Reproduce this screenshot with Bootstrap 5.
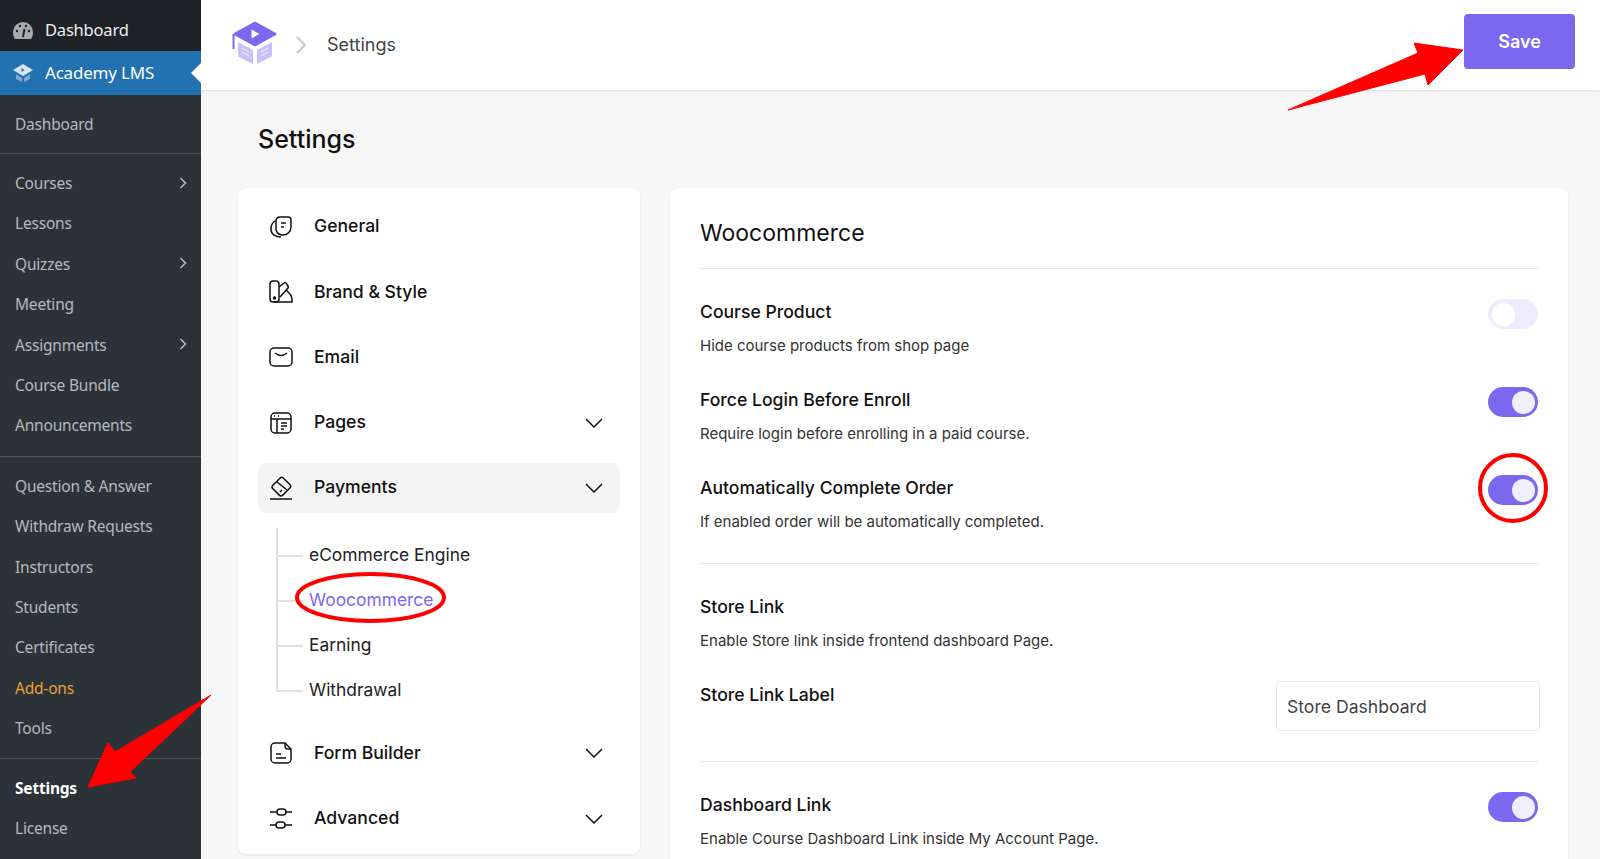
<!DOCTYPE html>
<html lang="en">
<head>
  <meta charset="UTF-8" />
  <title>Settings - Academy LMS</title>
  <link href="https://cdn.jsdelivr.net/npm/bootstrap@5.3.2/dist/css/bootstrap.min.css" rel="stylesheet"/>
  <style>
    html, body { height: 100%; overflow: hidden; }
    body { background: #f7f7f7; font-family: Inter, sans-serif; color: #111; }
    .wp-side { width: 201px; background: #2c3338; font-family: "Noto Sans", sans-serif; font-size: 15.5px; letter-spacing: -.2px; }
    .wp-top { height: 51px; background: #1d2327; color: #f0f0f1; padding-left: 12px; gap: 11px; font-size: 16.5px; padding-top: 10px; }
    .wp-cur { height: 44px; background: #2271b1; color: #fff; padding-left: 12px; gap: 11px; font-size: 17px; position: relative; }
    .wp-cur::after { content: ""; position: absolute; right: 0; top: 12px; border: 10px solid transparent; border-right-color: #fff; border-left: 0; }
    .wp-group { border-bottom: 1px solid #50565b; padding: 9.5px 15px; }
    .wp-first { height: 59px; padding-top: 1px; padding-bottom: 0; }
    .wp-last { padding: 9px 15px 0; }
    .wp-link { height: 40.4px; color: #b4b9be; position: relative; }
    .wp-link svg { position: absolute; right: -1px; top: 13px; }
    .wp-orange { color: #f0a030; }
    .wp-active { color: #fff; font-weight: 700; }
    .top-bar { height: 90px; background: #fff; box-shadow: 0 1px 3px rgba(0,0,0,.1); padding: 0 25px 0 31px; position: relative; }
    .top-logo { margin-bottom: 5px; }
    .crumb-sep { margin: 0 20px 0 17px; }
    .crumb-text { color: #444; font-size: 18px; margin-bottom: 2px; }
    .save-btn { width: 111px; height: 55px; margin-bottom: 7px; background: #7b68ee; border: 0; color: #fff; font-weight: 600; font-size: 18px; border-radius: 4px; }
    .page-title { font-size: 25px; font-weight: 500; margin: 34px 0 0 57px; height: 64px; line-height: 30px; }
    .panels { padding-left: 37px; gap: 30px; }
    .panel { background: #fff; border-radius: 8px; box-shadow: 0 1px 3px rgba(0,0,0,.08); }
    .menu-panel { width: 402px; height: 666px; padding: 6px 20px 0; }
    .menu-item { height: 65.3px; padding: 0 17px 0 11px; font-size: 17.6px; font-weight: 450; gap: 21px; }
    .menu-item svg.chev { margin-left: auto; }
    .menu-on { background: #f4f4f4; border-radius: 8px; height: 50px; margin: 7.5px 0; }
    .sub-list { margin: 15px 0 8px 18px; padding-top: 5px; font-size: 17.4px; position: relative; }
    .sub-list::before { content: ""; position: absolute; left: 0; top: 0; bottom: 21px; width: 2px; background: #ddd; }
    .sub-item { height: 45px; padding-left: 33px; position: relative; color: #222; }
    .sub-item::before { content: ""; position: absolute; left: 0; top: 22px; width: 27px; height: 2px; background: #e2e2e2; }
    .sub-on { color: #7b68ee; }
    .form-panel { width: 898px; height: 800px; padding: 22px 30px; }
    .form-title { font-size: 23px; font-weight: 400; height: 59px; border-bottom: 1px solid #e9e9e9; line-height: 46px; }
    .opt-name { font-size: 17.6px; font-weight: 450; line-height: 24px; }
    .opt-desc { font-size: 15px; color: #333; margin-top: 10px; line-height: 24px; }
    .opt-row { height: 88px; }
    .opt-block { padding-top: 31px; margin-bottom: -1px; }
    .opt-sep { border-top: 1px solid #e9e9e9; padding-top: 31px; position: relative; }
    .opt-label-row { height: 78px; }
    .tgl { width: 50px; height: 30px; border-radius: 15px; background: #7b68ee; position: relative; margin-top: -1px; flex: none; }
    .tgl::after { content: ""; position: absolute; top: 4px; right: 3px; width: 23px; height: 23px; border-radius: 50%; background: #f1effd; }
    .tgl-off { background: #eeebfc; }
    .tgl-off::after { right: auto; left: 4px; background: #fff; }
    .label-input { width: 264px; height: 50px; margin: -2px -2px 0 0; border: 1px solid #eaeaea; border-radius: 4px; padding: 0 10px; font-size: 17.6px; color: #444; font-family: Inter, sans-serif; }
    .mark-over { position: absolute; left: 0; top: 0; pointer-events: none; }
  </style>
</head>
<body class="d-flex">

  <div class="wp-side flex-shrink-0">
    <div class="wp-top d-flex align-items-center">
      <svg width="22" height="20" viewBox="0 0 22 20"><path d="M11 1a10 10 0 0 0-10 10c0 3 1 6 2 7h16c1-1 2-4 2-7A10 10 0 0 0 11 1z" fill="#a7aaad"/><path d="M11 16l1.500-8" stroke="#1d2327" stroke-width="2"/><circle cx="5" cy="10" r="1.200" fill="#1d2327"/><circle cx="8" cy="5" r="1.200" fill="#1d2327"/><circle cx="14" cy="5" r="1.200" fill="#1d2327"/><circle cx="17" cy="10" r="1.200" fill="#1d2327"/></svg>
      <span>Dashboard</span>
    </div>
    <div class="wp-cur d-flex align-items-center">
      <svg width="22" height="20" viewBox="0 0 22 20"><path d="M11 1l10 6-10 6L1 7z" fill="#d8e4ee"/><path d="M4 11l6 4v4l-6-3zM18 11l-6 4v4l6-3z" fill="#7ea9cc"/><path d="M9.500 5l3 2-3 2z" fill="#2271b1"/></svg>
      <span>Academy LMS</span>
    </div>
    <div class="wp-group wp-first d-flex flex-column justify-content-center">
      <div class="wp-link d-flex align-items-center">Dashboard</div>
    </div>
    <div class="wp-group">
      <div class="wp-link d-flex align-items-center">Courses<svg width="8" height="12" viewBox="0 0 8 12"><path d="M1.500 1l5 5-5 5" fill="none" stroke="#b4b9be" stroke-width="1.500"/></svg></div>
      <div class="wp-link d-flex align-items-center">Lessons</div>
      <div class="wp-link d-flex align-items-center">Quizzes<svg width="8" height="12" viewBox="0 0 8 12"><path d="M1.500 1l5 5-5 5" fill="none" stroke="#b4b9be" stroke-width="1.500"/></svg></div>
      <div class="wp-link d-flex align-items-center">Meeting</div>
      <div class="wp-link d-flex align-items-center">Assignments<svg width="8" height="12" viewBox="0 0 8 12"><path d="M1.500 1l5 5-5 5" fill="none" stroke="#b4b9be" stroke-width="1.500"/></svg></div>
      <div class="wp-link d-flex align-items-center">Course Bundle</div>
      <div class="wp-link d-flex align-items-center">Announcements</div>
    </div>
    <div class="wp-group">
      <div class="wp-link d-flex align-items-center">Question &amp; Answer</div>
      <div class="wp-link d-flex align-items-center">Withdraw Requests</div>
      <div class="wp-link d-flex align-items-center">Instructors</div>
      <div class="wp-link d-flex align-items-center">Students</div>
      <div class="wp-link d-flex align-items-center">Certificates</div>
      <div class="wp-link wp-orange d-flex align-items-center">Add-ons</div>
      <div class="wp-link d-flex align-items-center">Tools</div>
    </div>
    <div class="wp-last">
      <div class="wp-link wp-active d-flex align-items-center">Settings</div>
      <div class="wp-link d-flex align-items-center">License</div>
    </div>
  </div>

  <div class="flex-grow-1 overflow-hidden">
    <div class="top-bar d-flex align-items-center">
      <svg class="top-logo" width="46" height="43" viewBox="0 0 46 43">
        <path d="M22 1q1-.5 2 0l20 11q1 1 0 2L24 25q-1 .5-2 0L2 14q-1-1 0-2z" fill="#7b68ee"/>
        <path d="M1.500 13v15" stroke="#7b68ee" stroke-width="2"/>
        <path d="M6 21l15 8v14L7 36q-1-.5-1-2zM40 21l-15 8v14l14-7q1-.5 1-2z" fill="#c9c2f8"/>
        <path d="M10 27l7 4M10 31l7 4M36 27l-7 4M36 31l-7 4" stroke="#e9e6fd" stroke-width="1.200"/>
        <path d="M19.500 8.500l8 4.500-8 4.500z" fill="#fff"/>
      </svg>
      <svg class="crumb-sep" width="12" height="20" viewBox="0 0 12 20"><path d="M2 2l8 8-8 8" fill="none" stroke="#c8c8c8" stroke-width="2"/></svg>
      <span class="crumb-text">Settings</span>
      <button class="save-btn ms-auto" type="button">Save</button>
    </div>

    <div class="page-title">Settings</div>

    <div class="panels d-flex align-items-start">
      <div class="panel menu-panel flex-shrink-0">
        <div class="menu-item d-flex align-items-center">
          <svg width="24" height="24" viewBox="0 0 24 24" fill="none" stroke="#111" stroke-width="1.500"><path d="M10 2h9a3 3 0 0 1 3 3v7c0 5-4 8-8 8-3 0-6-2-7-5V6a4 4 0 0 1 3-4z"/><path d="M6 6a9 9 0 0 0-4 8c0 5 4 8 10 8"/><path d="M12 8h5M12 12h3"/></svg>
          <span>General</span>
        </div>
        <div class="menu-item d-flex align-items-center">
          <svg width="24" height="24" viewBox="0 0 24 24" fill="none" stroke="#111" stroke-width="1.500"><rect x="1" y="1" width="9" height="21" rx="3"/><circle cx="5.500" cy="18" r="1" fill="#111"/><path d="M10 7l5-4q1-1 2 0l2 3q1 2-1 3l-7 8"/><path d="M17 10l4 4q2 3 2 5v3H5"/></svg>
          <span>Brand &amp; Style</span>
        </div>
        <div class="menu-item d-flex align-items-center">
          <svg width="24" height="24" viewBox="0 0 24 24" fill="none" stroke="#111" stroke-width="1.500"><rect x="1" y="3" width="22" height="18" rx="4"/><path d="M6 8q6 5 12 0"/></svg>
          <span>Email</span>
        </div>
        <div class="menu-item d-flex align-items-center">
          <svg width="24" height="24" viewBox="0 0 24 24" fill="none" stroke="#111" stroke-width="1.500"><rect x="2" y="2" width="20" height="20" rx="4"/><path d="M2 8h20M8 8v14M12 12h6M12 15h6M12 18h3"/><path d="M5 5h1M9 5h1"/></svg>
          <span>Pages</span>
          <svg class="chev" width="18" height="10" viewBox="0 0 18 10"><path d="M1 1l8 8 8-8" fill="none" stroke="#111" stroke-width="1.500"/></svg>
        </div>
        <div class="menu-item menu-on d-flex align-items-center">
          <svg width="24" height="24" viewBox="0 0 24 24" fill="none" stroke="#111" stroke-width="1.500"><rect x="5" y="4" width="15" height="14" rx="2.500" transform="rotate(-45 12 11)"/><path d="M8 6l10 8M11 16l2-2M1 23h22"/></svg>
          <span>Payments</span>
          <svg class="chev" width="18" height="10" viewBox="0 0 18 10"><path d="M1 1l8 8 8-8" fill="none" stroke="#111" stroke-width="1.500"/></svg>
        </div>
        <div class="sub-list">
          <div class="sub-item d-flex align-items-center">eCommerce Engine</div>
          <div class="sub-item sub-on d-flex align-items-center">Woocommerce</div>
          <div class="sub-item d-flex align-items-center">Earning</div>
          <div class="sub-item d-flex align-items-center">Withdrawal</div>
        </div>
        <div class="menu-item d-flex align-items-center">
          <svg width="24" height="24" viewBox="0 0 24 24" fill="none" stroke="#111" stroke-width="1.500"><path d="M6 2h10l6 6v10a4 4 0 0 1-4 4H6a4 4 0 0 1-4-4V6a4 4 0 0 1 4-4z"/><path d="M16 2v3a3 3 0 0 0 3 3h3"/><path d="M7 13h5M7 17h10"/></svg>
          <span>Form Builder</span>
          <svg class="chev" width="18" height="10" viewBox="0 0 18 10"><path d="M1 1l8 8 8-8" fill="none" stroke="#111" stroke-width="1.500"/></svg>
        </div>
        <div class="menu-item d-flex align-items-center">
          <svg width="24" height="24" viewBox="0 0 24 24" fill="none" stroke="#111" stroke-width="1.500"><rect x="8" y="2" width="9" height="6" rx="3"/><rect x="7" y="15" width="9" height="6" rx="3"/><path d="M1 5h7M17 5h6M1 18h6M16 18h7"/></svg>
          <span>Advanced</span>
          <svg class="chev" width="18" height="10" viewBox="0 0 18 10"><path d="M1 1l8 8 8-8" fill="none" stroke="#111" stroke-width="1.500"/></svg>
        </div>
      </div>

      <div class="panel form-panel flex-shrink-0">
        <div class="form-title">Woocommerce</div>
        <div class="opt-block">
          <div class="opt-row d-flex justify-content-between">
            <div><div class="opt-name">Course Product</div><div class="opt-desc">Hide course products from shop page</div></div>
            <div class="tgl tgl-off"></div>
          </div>
          <div class="opt-row d-flex justify-content-between">
            <div><div class="opt-name">Force Login Before Enroll</div><div class="opt-desc">Require login before enrolling in a paid course.</div></div>
            <div class="tgl"></div>
          </div>
          <div class="opt-row d-flex justify-content-between">
            <div><div class="opt-name">Automatically Complete Order</div><div class="opt-desc">If enabled order will be automatically completed.</div></div>
            <div class="tgl"></div>
          </div>
        </div>
        <div class="opt-sep">
          <div class="opt-row"><div class="opt-name">Store Link</div><div class="opt-desc">Enable Store link inside frontend dashboard Page.</div></div>
          <div class="opt-label-row d-flex justify-content-between">
            <div class="opt-name">Store Link Label</div>
            <input class="label-input" type="text" value="Store Dashboard" />
          </div>
        </div>
        <div class="opt-sep">
          <div class="opt-row d-flex justify-content-between">
            <div><div class="opt-name">Dashboard Link</div><div class="opt-desc">Enable Course Dashboard Link inside My Account Page.</div></div>
            <div class="tgl"></div>
          </div>
        </div>
      </div>
    </div>
  </div>

  <!-- red annotations drawn over the screenshot -->
  <svg class="mark-over" width="1600" height="859" viewBox="0 0 1600 859">
    <path d="M1288 110L1418 53L1414 43L1463 50L1428 85L1425 74Z" fill="#f00" stroke="#f00" stroke-linejoin="round"/>
    <path d="M211 695L115 752L108 743L88 787L136 778L130 772Z" fill="#f00" stroke="#f00" stroke-linejoin="round"/>
    <ellipse cx="370.500" cy="597.500" rx="73.500" ry="23.500" fill="none" stroke="#f00" stroke-width="4"/>
    <circle cx="1513" cy="488" r="33" fill="none" stroke="#f00" stroke-width="4"/>
  </svg>

  <script src="https://cdn.jsdelivr.net/npm/bootstrap@5.3.2/dist/js/bootstrap.bundle.min.js"></script>
</body>
</html>
